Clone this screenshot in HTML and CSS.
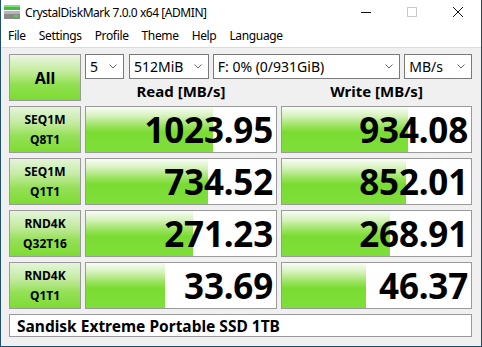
FILE: index.html
```html
<!DOCTYPE html>
<html lang="en">
<head>
  <meta charset="UTF-8" />
  <title>CrystalDiskMark 7.0.0 x64 [ADMIN]</title>
  <link rel="stylesheet" href="styles.css">
</head>
<body>

  <div class="window">
    <div class="titlebar">
      <svg class="app-icon" width="16" height="14" viewBox="0 0 16 14">
        <rect x="0" y="0" width="16" height="5" fill="#3fbf3f"/>
        <rect x="0" y="0" width="16" height="2" fill="#7fe07f"/>
        <rect x="0" y="6" width="16" height="8" fill="#8a8a8a"/>
        <rect x="0" y="6" width="16" height="3" fill="#b5b5b5"/>
        <rect x="10" y="10" width="4" height="2" fill="#4cd84c"/>
      </svg>
      <span class="title">CrystalDiskMark 7.0.0 x64 [ADMIN]</span>
      <div class="controls">
        <span class="ctl"><svg width="10" height="10" viewBox="0 0 10 10"><line x1="0" y1="5.5" x2="10" y2="5.5" stroke="#111" stroke-width="1"/></svg></span>
        <span class="ctl"><svg width="10" height="10" viewBox="0 0 10 10"><rect x="0.5" y="0.5" width="9" height="9" fill="none" stroke="#c8c8c8" stroke-width="1"/></svg></span>
        <span class="ctl"><svg width="10" height="10" viewBox="0 0 10 10"><path d="M0 0 L10 10 M10 0 L0 10" stroke="#111" stroke-width="1"/></svg></span>
      </div>
    </div>

    <nav class="menu">
      <span>File</span>
      <span>Settings</span>
      <span>Profile</span>
      <span>Theme</span>
      <span>Help</span>
      <span>Language</span>
    </nav>

    <main class="board">
      <div class="btn-all">All</div>

      <div class="settings">
        <div class="selects">
          <div class="select sel-count">5<svg class="chev" width="8" height="5" viewBox="0 0 8 5"><path d="M0.5 0.5 L4 4 L7.5 0.5" fill="none" stroke="#666"/></svg></div>
          <div class="select sel-size">512MiB<svg class="chev" width="8" height="5" viewBox="0 0 8 5"><path d="M0.5 0.5 L4 4 L7.5 0.5" fill="none" stroke="#666"/></svg></div>
          <div class="select sel-drive">F: 0% (0/931GiB)<svg class="chev" width="8" height="5" viewBox="0 0 8 5"><path d="M0.5 0.5 L4 4 L7.5 0.5" fill="none" stroke="#666"/></svg></div>
          <div class="select sel-unit">MB/s<svg class="chev" width="8" height="5" viewBox="0 0 8 5"><path d="M0.5 0.5 L4 4 L7.5 0.5" fill="none" stroke="#666"/></svg></div>
        </div>
        <div class="head">Read [MB/s]</div>
        <div class="head">Write [MB/s]</div>
      </div>

      <div class="label">SEQ1M<br>Q8T1</div>
      <div class="value"><div class="bar" style="width:67%"></div><span>1023.95</span></div>
      <div class="value"><div class="bar" style="width:66.6%"></div><span>934.08</span></div>

      <div class="label">SEQ1M<br>Q1T1</div>
      <div class="value"><div class="bar" style="width:64.2%"></div><span>734.52</span></div>
      <div class="value"><div class="bar" style="width:65.6%"></div><span>852.01</span></div>

      <div class="label">RND4K<br>Q32T16</div>
      <div class="value"><div class="bar" style="width:56.3%"></div><span>271.23</span></div>
      <div class="value"><div class="bar" style="width:57.1%"></div><span>268.91</span></div>

      <div class="label">RND4K<br>Q1T1</div>
      <div class="value"><div class="bar" style="width:41.6%"></div><span>33.69</span></div>
      <div class="value"><div class="bar" style="width:44.4%"></div><span>46.37</span></div>

      <div class="drive-name">Sandisk Extreme Portable SSD 1TB</div>
    </main>
  </div>

</body>
</html>
```

FILE: styles.css
```css
body {
  margin: 0;
  font-family: "Noto Sans", sans-serif;
  color: #000;
  background: #fff;
}

.window {
  width: 482px;
  height: 347px;
  box-sizing: border-box;
  border: 1px solid #1d4f6c;
  border-top: none;
  background: #f0f0f0;
  display: flex;
  flex-direction: column;
}

.titlebar {
  height: 24px;
  background: #fff;
  display: flex;
  align-items: center;
  padding-left: 3px;
}

.app-icon {
  margin-top: -1px;
}

.title {
  margin-left: 5px;
  font-size: 12px;
  letter-spacing: -0.45px;
  margin-top: 1px;
}

.controls {
  margin-left: auto;
  display: flex;
  height: 100%;
}

.ctl {
  width: 46px;
  display: flex;
  align-items: center;
  justify-content: center;
}

.menu {
  height: 23px;
  background: #fff;
  display: flex;
  align-items: center;
  gap: 13px;
  padding-left: 7px;
  font-size: 12px;
  letter-spacing: -0.35px;
}

.board {
  border-top: 1px solid #dcdcdc;
  padding: 6px 8px 0 8px;
  display: grid;
  grid-template-columns: 72px 192px 191px;
  grid-template-rows: 47px 47px 47px 47px 47px 23px;
  column-gap: 4px;
  row-gap: 5px;
}

.btn-all {
  border: 1px solid #9a9a9a;
  background: linear-gradient(to bottom, #eaf6e2 0%, #c6ec9f 35%, #92e052 65%, #7bdc30 100%);
  display: flex;
  align-items: center;
  justify-content: center;
  font-weight: bold;
  font-size: 16px;
}

.settings {
  grid-column: 2 / 4;
  display: grid;
  grid-template-columns: 192px 191px;
  grid-template-rows: 25px 1fr;
  column-gap: 4px;
}

.selects {
  grid-column: 1 / 3;
  display: flex;
  gap: 4px;
}

.select {
  box-sizing: border-box;
  height: 25px;
  border: 1px solid #7a7a7a;
  background: #fff;
  font-size: 14px;
  display: flex;
  align-items: center;
  padding-left: 4px;
  padding-right: 6px;
}

.chev {
  margin-left: auto;
}

.sel-count { width: 39px; margin-right: 1px; }
.sel-size { width: 80px; }
.sel-drive { width: 188px; }
.sel-unit { width: 68px; }

.head {
  display: flex;
  align-items: center;
  justify-content: center;
  font-weight: bold;
  font-size: 15px;
  padding-top: 1px;
}

.label {
  border: 1px solid #9a9a9a;
  background: linear-gradient(to bottom, #e4f4da 0%, #c4eba0 35%, #94e055 65%, #7ddc33 100%);
  display: flex;
  align-items: center;
  justify-content: center;
  text-align: center;
  font-weight: bold;
  font-size: 12px;
  line-height: 20px;
}

.value {
  position: relative;
  border: 1px solid #9a9a9a;
  background: #fff;
  display: flex;
  align-items: center;
  justify-content: flex-end;
  padding-right: 3px;
  font-weight: bold;
  font-size: 35px;
  letter-spacing: -0.2px;
}

.value span {
  position: relative;
}

.bar {
  position: absolute;
  left: 0;
  top: 0;
  bottom: 0;
  background: linear-gradient(to bottom, #f8fcf5 0%, #d6f2bc 20%, #9ae35e 42%, #7adc33 56%, #7ddf38 100%);
}

.drive-name {
  grid-column: 1 / 4;
  border: 1px solid #9a9a9a;
  background: #fff;
  display: flex;
  align-items: center;
  padding-left: 7px;
  font-weight: bold;
  font-size: 15.5px;
}
```
